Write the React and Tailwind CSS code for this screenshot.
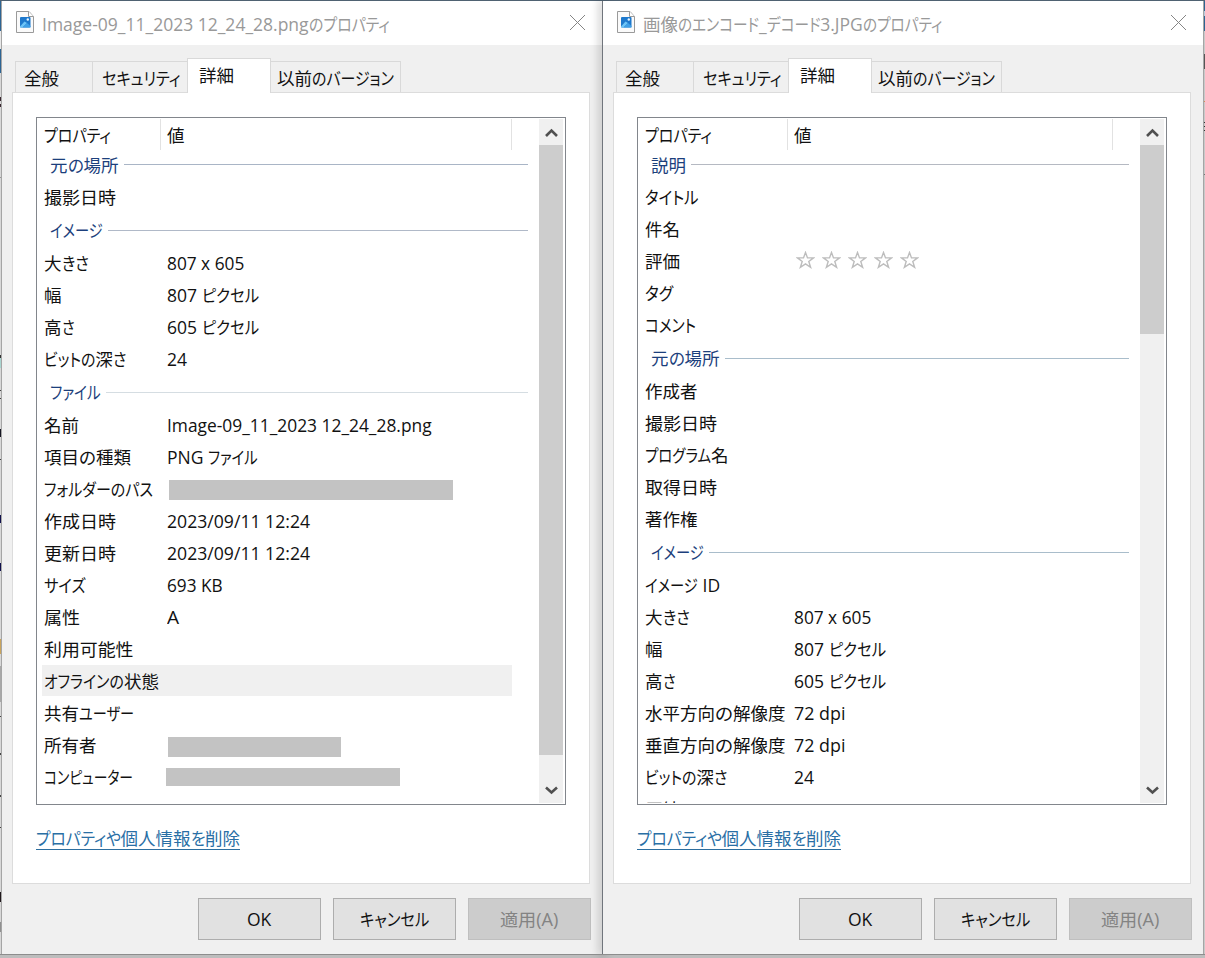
import { useLayoutEffect, useRef } from "react";

const KANA = /([\u3040-\u30ff]+)/;

// Lays out a label in a fixed width; narrow UI kana absorb the difference.
function T({ children, w, className = "" }) {
  const ref = useRef(null);
  const parts = children.split(KANA).filter(Boolean);
  const anyKana = parts.some((p) => KANA.test(p));
  useLayoutEffect(() => {
    const runs = [...ref.current.children];
    let fixed = 0;
    let flex = 0;
    runs.forEach((r) => {
      const n = r.firstChild.offsetWidth;
      if (r.dataset.flex) flex += n;
      else fixed += n;
    });
    const s = (w - fixed) / flex;
    runs.forEach((r) => {
      if (!r.dataset.flex) return;
      const n = r.firstChild.offsetWidth;
      r.style.width = `${n * s}px`;
      r.firstChild.style.transform = `scaleX(${s})`;
    });
  }, [w, children]);
  return (
    <span ref={ref} className={`inline-flex shrink-0 whitespace-pre ${className}`}>
      {parts.map((p, i) => (
        <span key={i} data-flex={!anyKana || KANA.test(p) ? "1" : undefined} className="inline-block">
          <span className="inline-block origin-left [font-feature-settings:'palt']">{p}</span>
        </span>
      ))}
    </span>
  );
}

function FileIcon() {
  return (
    <svg width="18" height="22" viewBox="0 0 18 22" className="mb-[2px] shrink-0">
      <path d="M.5.5h12.5l4.500 5v16H.5z" fill="#fafafa" stroke="#9a9a9a" />
      <path d="M12.500.5v5h5" fill="#fff" stroke="#9a9a9a" />
      <rect x="4" y="6" width="10.500" height="10.500" rx="1" fill="#1d78cc" />
      <path d="M4 15.500l4.500-5 2.500 1.500-4.500 4.500H4z" fill="#6cc4f7" />
      <path d="M6.500 16.500l4.500-4.500 3.500 3v1.500z" fill="#3f9fe6" />
      <circle cx="11.800" cy="8.500" r="1.200" fill="#e4f4ff" />
    </svg>
  );
}

function Chevron({ down }) {
  return (
    <svg width="24" height="26" viewBox="0 0 24 26" className="shrink-0">
      <path d={down ? "M7 10.500l5.500 5 5.500-5" : "M7 17l5.500-5.500 5.500 5.500"} fill="none" stroke="#505050" strokeWidth="2.600" />
    </svg>
  );
}

function Stars() {
  return (
    <div className="flex gap-[7px] pb-[2px] pl-[2px]">
      {[0, 1, 2, 3, 4].map((i) => (
        <svg key={i} width="19" height="18" viewBox="0 0 19 18">
          <path d="M9.500 1.500l2 5.400h6l-4.700 3.600 1.800 5.800-5.100-3.500-5.100 3.500 1.800-5.800L1.500 6.900h6z" fill="#fff" stroke="#bdbdbd" strokeWidth="1.400" />
        </svg>
      ))}
    </div>
  );
}

function Group({ text, w, first, color }) {
  return (
    <div className={`flex shrink-0 items-center pl-[13px] pr-[11px] ${first ? "h-[31px] pb-[2px]" : "h-[34px]"}`}>
      <T w={w} className="text-[#1c3f7c]">{text}</T>
      <div className={`ml-[5px] h-px flex-1 ${color}`} />
    </div>
  );
}

function Row({ label, w, value, vw, labelCol, selected, children }) {
  return (
    <div className="h-8 shrink-0 pl-[5px] pr-[27px]">
      <div className={`flex h-[31px] items-center pl-[2px] ${selected ? "bg-[#f0f0f0]" : ""}`}>
        <div className={`flex shrink-0 ${labelCol}`}>
          <T w={w}>{label}</T>
        </div>
        {value ? <T w={vw}>{value}</T> : children}
      </div>
    </div>
  );
}

function Tabs() {
  return (
    <div className="flex h-[35px] items-end pl-[3px]">
      <div className="flex h-[31px] w-[77px] items-center border-l border-t border-[#d9d9d9] pl-[8px] pt-px"><T w={35}>全般</T></div>
      <div className="flex h-[31px] w-[95px] items-center border-l border-t border-[#d9d9d9] pl-[9px] pt-px"><T w={79}>セキュリティ</T></div>
      <div className="relative -mb-px flex h-[35px] w-[84px] items-center border-x border-t border-[#d9d9d9] bg-white pb-[2px] pl-[11px]"><T w={35}>詳細</T></div>
      <div className="flex h-[31px] w-[130px] items-center border-r border-t border-[#d9d9d9] pl-[6px] pt-px"><T w={117}>以前のバージョン</T></div>
    </div>
  );
}

function Button({ text, w, disabled }) {
  return (
    <div className={`flex h-[42px] w-[123px] items-center justify-center border pr-px ${disabled ? "border-[#bfbfbf] bg-[#cccccc] text-[#838383]" : "border-[#adadad] bg-[#e1e1e1]"}`}>
      <T w={w}>{text}</T>
    </div>
  );
}

function Dialog({ labelHead, title, thumb, children }) {
  return (
    <div className="flex h-[953px] w-[600px] shrink-0 flex-col bg-[#f0f0f0]">
      <div className="flex h-11 shrink-0 items-center bg-white pl-[14px] pr-4 text-[#999999]">
        <FileIcon />
        <div className="ml-[8px] flex flex-1 items-center pt-px">{title}</div>
        <svg width="17" height="17" viewBox="0 0 17 17" className="mb-[2px]">
          <path d="M1 1l15 15M16 1L1 16" stroke="#858585" strokeWidth="1" fill="none" />
        </svg>
      </div>
      <div className="px-[10px] pt-[12px]">
        <Tabs />
        <div className="h-[792px] w-[578px] border border-[#dcdcdc] bg-white pl-[23px] pt-6">
          <div className="flex h-[688px] w-[530px] border border-[#82868c] py-px pr-[2px]">
            <div className="flex min-w-0 flex-1 flex-col overflow-hidden">
              <div className="flex h-[31px] shrink-0 items-center pl-[7px]">
                <div className={`flex h-full items-center border-r border-[#e2e2e2] ${labelHead}`}><T w={67}>プロパティ</T></div>
                <div className="mr-[27px] flex h-full flex-1 items-center border-r border-[#e2e2e2] pl-[6px]"><T w={18}>値</T></div>
              </div>
              {children}
            </div>
            <div className="flex w-6 shrink-0 flex-col bg-[#f0f0f0]">
              <Chevron />
              <div className={`bg-[#cdcdcd] ${thumb}`} />
              <div className="flex-1" />
              <Chevron down />
            </div>
          </div>
          <div className="mt-[21px] flex">
            <div className="flex h-[24px] items-center border-b border-[#2c6e9f] text-[#2a6fa5]"><T w={204}>プロパティや個人情報を削除</T></div>
          </div>
        </div>
        <div className="-ml-px mr-px mt-[14px] flex justify-end gap-3">
          <Button text="OK" w={24} />
          <Button text="キャンセル" w={69} />
          <Button text="適用(A)" w={58} disabled />
        </div>
      </div>
    </div>
  );
}

// Slivers of the windows behind the dialogs, from top to bottom.
const LEFT_EDGE = [
  "h-[30px] bg-[#2d6493]", "h-[18px] bg-[#e8e8e8]", "h-[24px] bg-[#2d6493]", "h-[24px]",
  "h-[4px] bg-[#3a2830]", "h-[3px]", "h-[3px] bg-[#3a2830]", "h-[70px]", "h-px bg-[#999]",
  "h-[177px]", "h-[3px] bg-[#333]", "h-[10px] bg-[#a9d5d0]", "h-[22px]", "h-px bg-[#444]",
  "h-[7px]", "h-px bg-[#444]", "h-[30px]", "h-[8px] bg-[#161622]", "h-[22px]", "h-px bg-[#444]",
  "h-[55px]", "h-[8px] bg-[#10104c]", "h-[40px]", "h-[8px] bg-[#10104c]", "h-[68px]",
  "h-[15px] bg-[#c9a45c]", "h-[12px]", "h-[36px] bg-[#a8a8a8]", "h-[14px]", "h-px bg-[#444]",
  "h-[36px]", "h-[2px] bg-[#444]", "h-[40px]", "h-[2px] bg-[#444]", "h-[30px]", "h-px bg-[#444]",
  "h-[64px]", "h-[10px] bg-[#20181c]", "h-[20px]", "h-[10px] bg-[#909090]",
];

const RIGHT_EDGE = [
  "h-[10px] bg-[#2d6493]", "h-[5px] bg-[#b5cbdc]", "h-[15px] bg-[#2d6493]", "h-[23px]",
  "h-[15px] bg-[#555]", "h-[32px]", "h-px bg-[#d98c5a]", "h-[20px]", "h-px bg-[#333]", "h-[3px]",
  "h-px bg-[#333]", "h-[3px]", "h-px bg-[#333]", "h-[43px]", "h-px bg-[#777]",
];

function Edge({ segments }) {
  return segments.map((s, i) => <div key={i} className={`shrink-0 ${s}`} />);
}

const A = "w-[123px]";
const B = "w-[149px]";

export default function App() {
  return (
    <div className="flex h-[958px] w-[1205px] flex-col overflow-hidden bg-[#bdbdbd] font-['Open_Sans','Noto_Sans_CJK_JP',sans-serif] text-[17.500px] leading-[24px] text-[#111111]">
      <div className="h-px shrink-0 bg-[#4f6272]" />
      <div className="flex h-[953px] shrink-0">
        <div className="flex w-[2px] shrink-0 flex-col overflow-hidden border-r border-[#a5a5a5] bg-[#d8d8d8]">
          <Edge segments={LEFT_EDGE} />
        </div>
        <Dialog
          labelHead="w-[117px]"
          thumb="h-[610px]"
          title={<><T w={267}>Image-09_11_2023 12_24_28.png</T><T w={81}>のプロパティ</T></>}
        >
          <Group text="元の場所" w={69} first color="bg-[#a9b5c6]" />
          <Row label="撮影日時" w={72} labelCol={A} />
          <Group text="イメージ" w={53} color="bg-[#b0b9c8]" />
          <Row label="大きさ" w={45} labelCol={A} value="807 x 605" vw={77} />
          <Row label="幅" w={18} labelCol={A} value="807 ピクセル" vw={92} />
          <Row label="高さ" w={31} labelCol={A} value="605 ピクセル" vw={92} />
          <Row label="ビットの深さ" w={83} labelCol={A} value="24" vw={20} />
          <Group text="ファイル" w={51} color="bg-[#d5dde2]" />
          <Row label="名前" w={35} labelCol={A} value="Image-09_11_2023 12_24_28.png" vw={265} />
          <Row label="項目の種類" w={87} labelCol={A} value="PNG ファイル" vw={91} />
          <Row label="フォルダーのパス" w={109} labelCol={A}>
            <div className="ml-[2px] mt-[3px] h-[20px] w-[284px] bg-[#c3c3c3]" />
          </Row>
          <Row label="作成日時" w={72} labelCol={A} value="2023/09/11 12:24" vw={143} />
          <Row label="更新日時" w={72} labelCol={A} value="2023/09/11 12:24" vw={143} />
          <Row label="サイズ" w={42} labelCol={A} value="693 KB" vw={56} />
          <Row label="属性" w={36} labelCol={A} value="A" vw={12} />
          <Row label="利用可能性" w={90} labelCol={A} />
          <Row label="オフラインの状態" w={115} labelCol={A} selected />
          <Row label="共有ユーザー" w={90} labelCol={A} />
          <Row label="所有者" w={53} labelCol={A}>
            <div className="ml-px mt-[4px] h-[20px] w-[173px] bg-[#c3c3c3]" />
          </Row>
          <Row label="コンピューター" w={89} labelCol={A}>
            <div className="-ml-px h-[18px] w-[234px] bg-[#c3c3c3]" />
          </Row>
        </Dialog>
        <div className="w-px shrink-0 bg-[#70757c] shadow-[0_0_10px_2px_rgba(0,0,0,0.28)]" />
        <Dialog
          labelHead="w-[143px]"
          thumb="h-[189px]"
          title={<T w={300}>画像のエンコード_デコード3.JPGのプロパティ</T>}
        >
          <Group text="説明" w={35} first color="bg-[#b5b9c2]" />
          <Row label="タイトル" w={54} labelCol={B} />
          <Row label="件名" w={35} labelCol={B} />
          <Row label="評価" w={35} labelCol={B}><Stars /></Row>
          <Row label="タグ" w={28} labelCol={B} />
          <Row label="コメント" w={51} labelCol={B} />
          <Group text="元の場所" w={69} color="bg-[#a9bdcb]" />
          <Row label="作成者" w={53} labelCol={B} />
          <Row label="撮影日時" w={72} labelCol={B} />
          <Row label="プログラム名" w={84} labelCol={B} />
          <Row label="取得日時" w={72} labelCol={B} />
          <Row label="著作権" w={53} labelCol={B} />
          <Group text="イメージ" w={53} color="bg-[#a9bdcb]" />
          <Row label="イメージ ID" w={75} labelCol={B} />
          <Row label="大きさ" w={45} labelCol={B} value="807 x 605" vw={77} />
          <Row label="幅" w={18} labelCol={B} value="807 ピクセル" vw={92} />
          <Row label="高さ" w={31} labelCol={B} value="605 ピクセル" vw={92} />
          <Row label="水平方向の解像度" w={141} labelCol={B} value="72 dpi" vw={51} />
          <Row label="垂直方向の解像度" w={141} labelCol={B} value="72 dpi" vw={51} />
          <Row label="ビットの深さ" w={83} labelCol={B} value="24" vw={20} />
          <Row label="圧縮" w={35} labelCol={B} />
        </Dialog>
        <div className="flex w-[2px] shrink-0 flex-col overflow-hidden border-l border-[#a5a5a5] bg-[#c9c9c9]">
          <Edge segments={RIGHT_EDGE} />
        </div>
      </div>
      <div className="h-px shrink-0 bg-[#8d8d8d]" />
    </div>
  );
}
